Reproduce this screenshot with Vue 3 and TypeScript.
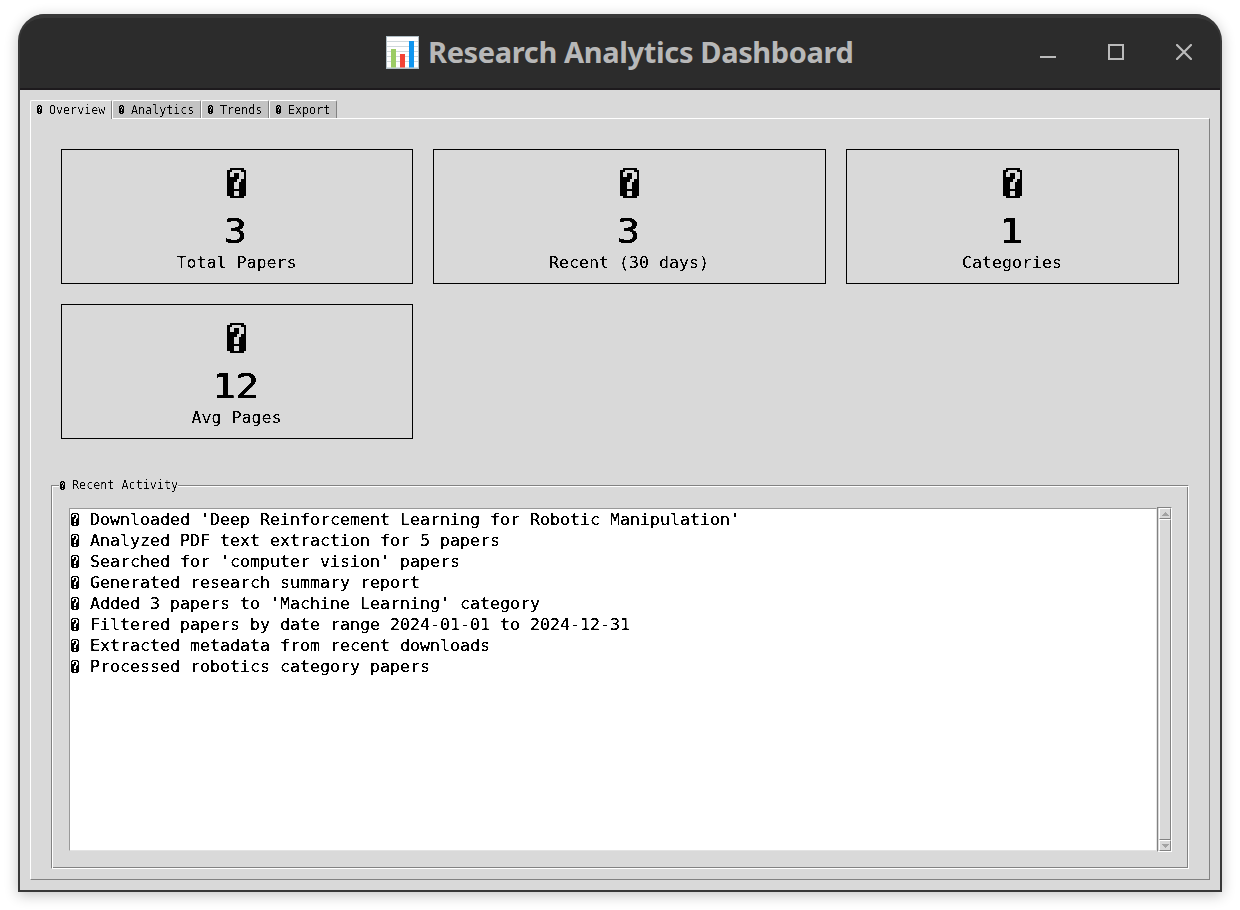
<script setup lang="ts">
import { h } from 'vue'

interface Stat { value: string; label: string }

const tabs: string[] = ['Overview', 'Analytics', 'Trends', 'Export']
const stats: Stat[] = [
  { value: '3', label: 'Total Papers' },
  { value: '3', label: 'Recent (30 days)' },
  { value: '1', label: 'Categories' },
  { value: '12', label: 'Avg Pages' },
]
const activities: string[] = [
  "Downloaded 'Deep Reinforcement Learning for Robotic Manipulation'",
  'Analyzed PDF text extraction for 5 papers',
  "Searched for 'computer vision' papers",
  'Generated research summary report',
  "Added 3 papers to 'Machine Learning' category",
  'Filtered papers by date range 2024-01-01 to 2024-12-31',
  'Extracted metadata from recent downloads',
  'Processed robotics category papers',
]

// Bitmap placeholder for symbols that the font lacks: a filled cell with a cut-out question mark.
const LostBig = () =>
  h('svg', { viewBox: '0 0 19 30', 'shape-rendering': 'crispEdges' }, [
    h('path', {
      'fill-rule': 'evenodd',
      d: 'M3 0H17V2H19V28H17V30H3V28H0V2H3Z M5 2H14V4H17V11H14V14H12V21H7V14H10V11H12V5H7V9H3V4H5Z M7 23H12V28H7Z',
    }),
  ])
const LostMid = () =>
  h('svg', { viewBox: '0 0 8 13', 'shape-rendering': 'crispEdges' }, [
    h('path', {
      'fill-rule': 'evenodd',
      d: 'M1 0H7V1H8V12H7V13H1V12H0V1H1Z M2 1H6V2H7V5H6V6H5V9H3V6H4V5H5V2H3V4H1V2H2Z M3 10H5V12H3Z',
    }),
  ])
const LostSmall = () =>
  h('svg', { viewBox: '0 0 5 9', 'shape-rendering': 'crispEdges' }, [
    h('path', {
      'fill-rule': 'evenodd',
      d: 'M1 0H4V1H5V8H4V9H1V8H0V1H1Z M2 1H3V2H2Z M3 2H4V4H3Z M2 4H3V6H2Z M2 7H3V8H2Z M1 2H2V3H1Z',
    }),
  ])
</script>

<template>
  <div class="desktop">
    <svg class="defs" width="0" height="0">
      <filter id="crisp" x="0" y="0" width="100%" height="100%" color-interpolation-filters="sRGB">
        <feComponentTransfer><feFuncA type="linear" slope="12" intercept="-5" /></feComponentTransfer>
      </filter>
      <filter id="crisp-thin" x="0" y="0" width="100%" height="100%" color-interpolation-filters="sRGB">
        <feComponentTransfer><feFuncA type="linear" slope="4" intercept="-1.8" /></feComponentTransfer>
      </filter>
    </svg>
    <div class="window">
      <header class="titlebar">
        <div class="title">
          <svg class="chart" viewBox="0 0 33 33">
            <rect width="33" height="33" fill="#b0bec5" />
            <rect x="1" y="1" width="31" height="30.5" fill="#fff" />
            <path d="M1 5.5H32M1 10.5H32M1 15.5H32M1 20.5H32M1 25.5H32" stroke="#cfd8dc" />
            <rect x="5" y="13" width="5" height="18.5" fill="#9ccc65" />
            <rect x="14" y="18" width="5" height="13.5" fill="#f44336" />
            <rect x="23" y="5" width="5" height="26.5" fill="#0f96f0" />
          </svg>
          <span class="title-text">Research Analytics Dashboard</span>
        </div>
        <div class="controls">
          <svg viewBox="0 0 16 16"><rect y="12" width="16" height="2" fill="#bbb" /></svg>
          <svg viewBox="0 0 16 16"><rect x="1" y="1" width="14" height="14" fill="none" stroke="#bbb" stroke-width="2" /></svg>
          <svg viewBox="0 0 16 16"><path d="M1 1L15 15M15 1L1 15" stroke="#bbb" stroke-width="2.2" stroke-linecap="round" /></svg>
        </div>
      </header>
      <main class="body">
        <nav class="tabs">
          <div v-for="(t, i) in tabs" :key="t" class="tab" :class="{ active: i === 0 }">
            <LostSmall class="lost-s" /><span class="thin">{{ t }}</span>
          </div>
        </nav>
        <section class="pane">
          <div class="cards">
            <div v-for="s in stats" :key="s.label" class="card">
              <LostBig class="lost-b" />
              <div class="value"><span class="crisp">{{ s.value }}</span></div>
              <div class="label crisp">{{ s.label }}</div>
            </div>
          </div>
          <div class="group">
            <div class="legend"><LostSmall class="lost-s" /><span class="thin">Recent Activity</span></div>
            <div class="group-inner">
              <div class="list">
                <div v-for="a in activities" :key="a" class="row">
                  <LostMid class="lost-m" /><span class="crisp">{{ a }}</span>
                </div>
              </div>
              <div class="scroll">
                <div class="raised arrow"><svg viewBox="0 0 7 4" shape-rendering="crispEdges"><path d="M3 0H4V1H5V2H6V3H7V4H0V3H1V2H2V1H3Z" fill="#a3a3a3" /></svg></div>
                <div class="raised thumb"></div>
                <div class="raised arrow"><svg viewBox="0 0 7 4" shape-rendering="crispEdges"><path d="M0 0H7V1H6V2H5V3H4V4H3V3H2V2H1V1H0Z" fill="#a3a3a3" /></svg></div>
              </div>
            </div>
          </div>
        </section>
      </main>
    </div>
  </div>
</template>

<style>
body { margin: 0; background: #fff; overflow: hidden; }
</style>

<style scoped>
* { box-sizing: border-box; }
svg { display: block; flex: none; }
.defs { position: absolute; }
.desktop { height: 910px; padding: 14px 18px 18px; background: #fff; font-family: "DejaVu Sans Mono", "Liberation Mono", monospace; color: #000; }
.crisp { filter: url(#crisp); white-space: pre; }
.thin { filter: url(#crisp-thin); white-space: pre; }
.window { height: 878px; display: flex; flex-direction: column; background: #383838; border-radius: 27px 27px 0 0; padding: 0 2px 2px; box-shadow: 0 3px 14px rgba(0, 0, 0, .24); }
.titlebar { height: 76px; flex: none; display: grid; grid-template-columns: 1fr auto 1fr; align-items: center; background: #2c2c2c; border-top: 4px solid #383838; border-bottom: 2px solid #1d1a1d; border-radius: 25px 25px 0 0; padding: 0 28px 2px 0; }
.title { grid-column: 2; display: flex; align-items: center; gap: 9px; margin-left: 27px; }
.chart { width: 33px; height: 33px; }
.title-text { font: bold 29px/36px "Noto Sans", sans-serif; color: #b8b8b8; white-space: nowrap; width: 425px; letter-spacing: -0.36px; padding-bottom: 1px; }
.controls { justify-self: end; display: flex; gap: 52px; }
.controls svg { width: 16px; height: 16px; }
.body { flex: 1; display: flex; flex-direction: column; background: #d9d9d9; padding: 10px; }
.tabs { display: flex; height: 18px; position: relative; z-index: 1; }
.tab { display: flex; align-items: center; gap: 7px; height: 18px; padding-left: 6px; font-size: 11.7px; line-height: 18px; background: #c3c3c3; border: 1px solid #fff; border-right-color: #828282; border-bottom: 0; border-radius: 2px 2px 0 0; }
.tab:nth-child(1) { width: 82px; }
.tab:nth-child(2) { width: 89px; }
.tab:nth-child(3) { width: 68px; }
.tab:nth-child(4) { width: 68px; }
.tab.active { height: 19px; background: #d9d9d9; padding-bottom: 1px; }
.lost-s { width: 5px; height: 9px; }
.pane { flex: 1; border: 1px solid; border-color: #fff #828282 #828282 #fff; padding: 30px 20px 10px; display: flex; flex-direction: column; }
.cards { display: grid; grid-template-columns: 352px 393px 333px; grid-auto-rows: 135px; gap: 20px; margin: 0 10px; }
.card { border: 1px solid #000; display: flex; flex-direction: column; align-items: center; padding: 18px 1px 0 0; }
.lost-b { width: 19px; height: 30px; }
.value { font-size: 34.5px; line-height: 40px; height: 40px; margin-top: 13px; transform: scaleX(1.12); -webkit-text-stroke: .5px #000; padding-right: 2px; }
.value span { display: block; }
.label { font-size: 16.61px; line-height: 22px; margin-top: 1px; }
.group { flex: 1; margin-top: 39px; padding-top: 7px; display: flex; flex-direction: column; }
.legend { position: relative; z-index: 1; height: 14px; margin: -7px 0 -7px 8px; width: max-content; padding-left: 1px; background: #d9d9d9; display: flex; align-items: center; gap: 7px; font-size: 11.75px; line-height: 14px; }
.group-inner { flex: 1; display: flex; border: 1px solid #828282; border-right-color: #fff; border-bottom-color: #fff; box-shadow: inset 1px 1px #fff, inset -1px -1px #828282; padding: 21px 16px 16px 17px; }
.list { flex: 1; background: #fff; margin: 1px 0; border: 1px solid; border-color: #999 #e3e3e3 #e3e3e3 #999; padding-left: 1px; }
.row { display: flex; align-items: center; gap: 11px; height: 21px; font-size: 16.61px; line-height: 21px; }
.row .crisp { -webkit-text-stroke: .15px #000; }
.lost-m { width: 8px; height: 13px; }
.row .lost-m { margin-bottom: 1px; }
.scroll { width: 15px; border: 1px solid; border-color: #828282 #fff #fff #828282; display: flex; flex-direction: column; padding-left: 1px; }
.raised { border: 1px solid; border-color: #fff #828282 #828282 #fff; background: #d9d9d9; }
.arrow { height: 11px; display: flex; align-items: center; justify-content: center; }
.arrow svg { width: 7px; height: 4px; }
.thumb { flex: 1; }
</style>
